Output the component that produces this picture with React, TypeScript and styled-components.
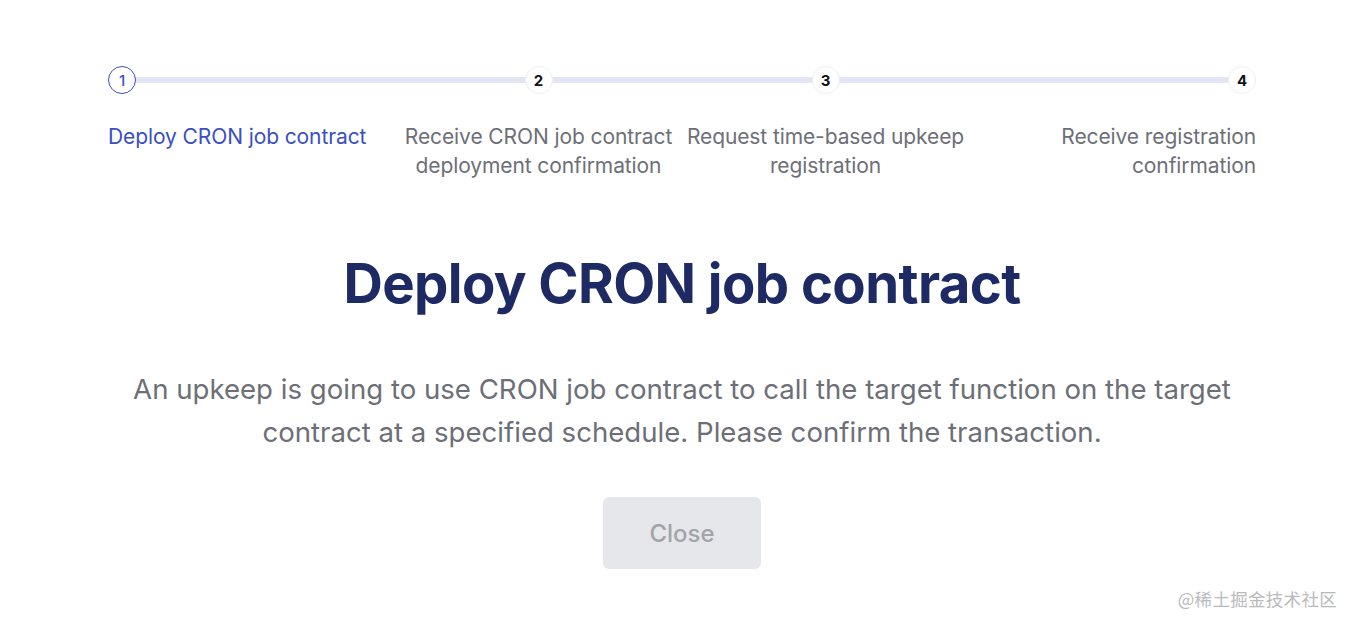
import React, { FC } from "react";
import styled, { createGlobalStyle } from "styled-components";

const GlobalStyle = createGlobalStyle`
  html, body {
    margin: 0;
    padding: 0;
    background: #ffffff;
  }
  body {
    font-family: Inter, "Noto Sans", sans-serif;
  }
`;

const Page = styled.div`
  width: 1356px;
  height: 630px;
  position: relative;
  box-sizing: border-box;
  padding: 66px 100px 0 108px;
  display: flex;
  flex-direction: column;
  align-items: center;
`;

const Stepper = styled.div`
  width: 1148px;
  position: relative;
  display: grid;
  grid-template-columns: repeat(4, 1fr);
`;

const Track = styled.div`
  position: absolute;
  top: 11px;
  left: 14px;
  right: 14px;
  height: 6px;
  background: #e1e5f6;
`;

type Align = "start" | "center" | "end";

const Step = styled.div<{ $align: Align }>`
  position: relative;
  display: flex;
  flex-direction: column;
  align-items: ${(p) => (p.$align === "center" ? "center" : `flex-${p.$align}`)};
  text-align: ${(p) => (p.$align === "start" ? "left" : p.$align === "end" ? "right" : "center")};
`;

const Dot = styled.div<{ $active?: boolean }>`
  width: 28px;
  height: 28px;
  box-sizing: border-box;
  border-radius: 50%;
  background: #ffffff;
  border: 1px solid ${(p) => (p.$active ? "#3a4fc2" : "#eceef4")};
  color: ${(p) => (p.$active ? "#3a4fc2" : "#111218")};
  font-size: 15px;
  font-weight: ${(p) => (p.$active ? 500 : 700)};
  display: flex;
  align-items: center;
  justify-content: center;
`;

const StepLabel = styled.div<{ $active?: boolean }>`
  margin-top: 28px;
  font-size: 21px;
  line-height: 29px;
  color: ${(p) => (p.$active ? "#3a4fc2" : "#6d6f78")};
  letter-spacing: -0.1px;
  white-space: nowrap;
`;

const Title = styled.h1`
  margin: 69px 0 0;
  font-size: 54.5px;
  line-height: 68px;
  font-weight: 700;
  color: #1d2a64;
  letter-spacing: -0.6px;
`;

const Description = styled.p`
  margin: 51px 0 0;
  width: 1148px;
  text-align: center;
  font-size: 27.6px;
  line-height: 43px;
  color: #6d6f78;
`;

const CloseButton = styled.button`
  margin-top: 43px;
  width: 158px;
  height: 72px;
  border: none;
  border-radius: 6px;
  background: #e6e7ea;
  color: #a2a4a9;
  font-family: inherit;
  font-size: 24px;
  font-weight: 500;
`;

const Watermark = styled.div`
  position: absolute;
  right: 19px;
  bottom: 19px;
  font-size: 17.5px;
  color: #b9babc;
  font-family: "Noto Sans CJK SC", "Noto Sans", sans-serif;
  letter-spacing: 0.3px;
`;

const steps: { label: string[]; align: Align }[] = [
  { label: ["Deploy CRON job contract"], align: "start" },
  { label: ["Receive CRON job contract", "deployment confirmation"], align: "center" },
  { label: ["Request time-based upkeep", "registration"], align: "center" },
  { label: ["Receive registration", "confirmation"], align: "end" },
];

const App: FC = () => {
  return (
    <>
      <GlobalStyle />
      <Page>
        <Stepper>
          <Track />
          {steps.map((s, i) => (
            <Step key={i} $align={s.align}>
              <Dot $active={i === 0}>{i + 1}</Dot>
              <StepLabel $active={i === 0}>
                {s.label.map((l) => (
                  <div key={l}>{l}</div>
                ))}
              </StepLabel>
            </Step>
          ))}
        </Stepper>
        <Title>Deploy CRON job contract</Title>
        <Description>
          An upkeep is going to use CRON job contract to call the target function on the target
          <br />
          contract at a specified schedule. Please confirm the transaction.
        </Description>
        <CloseButton>Close</CloseButton>
        <Watermark>@稀土掘金技术社区</Watermark>
      </Page>
    </>
  );
};

export default App;
